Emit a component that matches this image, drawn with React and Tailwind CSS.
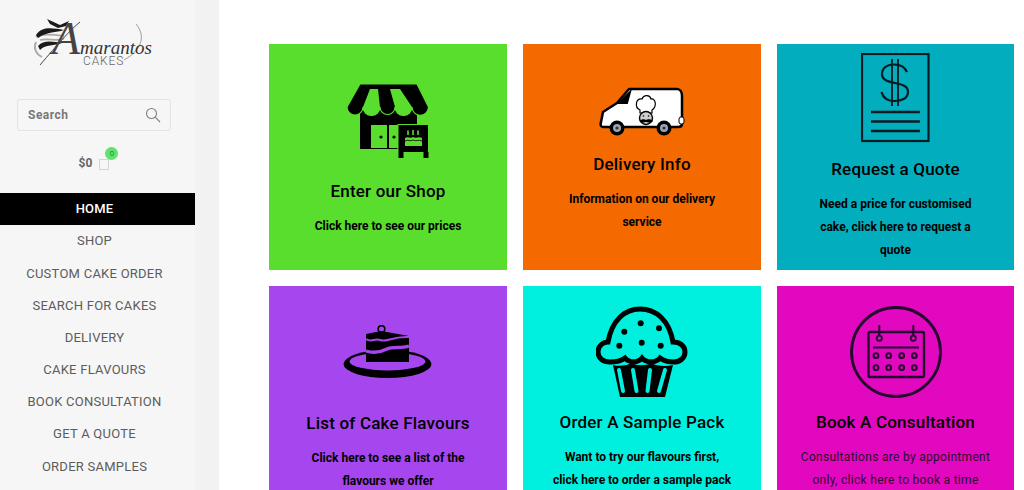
const menu = ["SHOP", "CUSTOM CAKE ORDER", "SEARCH FOR CAKES", "DELIVERY", "CAKE FLAVOURS", "BOOK CONSULTATION", "GET A QUOTE", "ORDER SAMPLES"];

function Logo() {
  return (
    <svg width="130" height="60" viewBox="30 12 130 60" className="block">
      <path d="M36 37C40 33 56 35 64 36M36 42C33 48 36 54 42 57M64 38C60 42 48 38 40 40" fill="none" stroke="#aaa" strokeWidth="1.8" />
      <path d="M36 35C42 26 52 28 64 30C56 33 48 31 38 38ZM38 46C44 39 54 42 62 43C54 46 46 44 40 50ZM47 19L60 25L69 21L66 26L58 28L50 24Z" fill="#1a1a1a" />
      <path d="M80 22C70 30 58 44 40 65" fill="none" stroke="#333" strokeWidth="0.9" />
      <path d="M136 24C146 36 142 50 124 60" fill="none" stroke="#777" strokeWidth="0.7" />
      <text x="52" y="54" fontSize="46" fontFamily="'Liberation Serif', serif" fontStyle="italic" fill="#444">A</text>
      <text x="80" y="54" fontSize="19" textLength="72" fontFamily="'Liberation Serif', serif" fontStyle="italic" fill="#333">marantos</text>
      <text x="83" y="64.5" fontSize="12" fontFamily="Roboto, sans-serif" fontWeight="300" letterSpacing="0.9" fill="#666">CAKES</text>
    </svg>
  );
}

function ShopIcon() {
  return (
    <svg width="82" height="76" viewBox="347 82 82 76" className="block">
      <rect x="360" y="108" width="57" height="41" fill="#000" />
      <path d="M371 125H387V148H371ZM389 125H398V148H389Z" fill="#5ade2e" />
      <circle cx="381" cy="137" r="1.6" fill="#000" /><circle cx="394" cy="137" r="1.6" fill="#000" />
      <path d="M360 84H417L428.5 107A8.25 8.25 0 0 1 412 107A8.5 8.5 0 0 1 395 107A7.5 7.5 0 0 1 380 107A8.5 8.5 0 0 1 363 107A8 8 0 0 1 347 107Z" fill="#000" stroke="#5ade2e" strokeWidth="1.2" />
      <path d="M370 89H378L380 107A8.5 8.5 0 0 1 363 107ZM390 89H400L412 107A8.5 8.5 0 0 1 395 107Z" fill="#5ade2e" />
      <rect x="398" y="124.5" width="30.5" height="28" fill="#000" stroke="#5ade2e" strokeWidth="1" />
      <rect x="398.5" y="152" width="5" height="6" fill="#000" /><rect x="423.5" y="152" width="5" height="6" fill="#000" />
      <path d="M405 138C408 136 410 139 413 137C416 139 419 136 422 138V146H405Z" fill="#5ade2e" />
      <path d="M408 130.5V135M413 130V135M418 130.5V135" stroke="#5ade2e" strokeWidth="1.6" />
      <path d="M405 141C408 139 410 142 413 140C416 142 419 139 422 141" fill="none" stroke="#000" strokeWidth="0.8" />
    </svg>
  );
}

function VanIcon() {
  return (
    <svg width="86" height="50" viewBox="597 87 86 50" className="block">
      <path d="M627 89H675C678 89 680 92 680 96V124C680 126 678 127 676 127H601C599 127 598 125 599 122L601 112L615 103Z" fill="#fff" stroke="#000" strokeWidth="2.5" strokeLinejoin="round" />
      <path d="M617 103L628 92L625 103Z" fill="#000" stroke="#000" strokeWidth="2" />
      <circle cx="615" cy="128" r="7.5" fill="#000" /><circle cx="615" cy="128" r="4" fill="#9aa6b5" /><circle cx="615" cy="128" r="1.6" fill="#333" />
      <circle cx="662" cy="128" r="7.5" fill="#000" /><circle cx="662" cy="128" r="4" fill="#9aa6b5" /><circle cx="662" cy="128" r="1.6" fill="#333" />
      <rect x="677" y="117" width="5" height="7" rx="2" fill="#fff" stroke="#000" />
      <path d="M638 110C632 107 634 98 640 99C642 94 648 95 649 99C654 98 655 107 650 110V113H638Z" fill="#fff" stroke="#000" strokeWidth="1.2" />
      <circle cx="644" cy="118" r="6.5" fill="#cfcfcf" stroke="#000" strokeWidth="1.4" />
      <path d="M638 121C641 118 643 120 644 120C645 120 647 118 651 121C648 124 645 122 644 122C643 122 640 124 638 121Z" fill="#000" />
      <circle cx="641.5" cy="116" r="0.8" fill="#000" /><circle cx="646.5" cy="116" r="0.8" fill="#000" />
    </svg>
  );
}

function QuoteIcon() {
  return (
    <svg width="70" height="90" viewBox="861 54 70 90" className="block" fill="none" stroke="#061a22">
      <rect x="862" y="55" width="66.5" height="87" strokeWidth="2.2" />
      <path d="M907 73C905 68 900 65.5 894 65.5C887 65.5 882 69 882 75C882 81 888 82.5 895 84C902 85.5 908 87 908 93C908 99 902 102 895 102C888 102 883 99 881.5 93" strokeWidth="2.2" />
      <path d="M892 60V107M898 60V107" strokeWidth="1.8" />
      <path d="M871 113H920M871 122.5H920M871 132H920" strokeWidth="2.4" />
    </svg>
  );
}

function CakeIcon() {
  return (
    <svg width="90" height="54" viewBox="344 325 90 54" className="block">
      <ellipse cx="388.5" cy="364" rx="44" ry="14" fill="#000" />
      <ellipse cx="388.5" cy="361.5" rx="38" ry="9" fill="#a646ee" />
      <path d="M367 334L382 331L410 336V362H367Z" fill="#000" />
      <circle cx="382.5" cy="329" r="3.3" fill="none" stroke="#000" strokeWidth="1.6" />
      <path d="M367 339C372 343 376 338 381 340C387 343 393 336 410 337" fill="none" stroke="#a646ee" strokeWidth="2" />
      <path d="M367 351C376 354 382 352 388 349C394 346 402 349 410 346" fill="none" stroke="#a646ee" strokeWidth="3.4" />
    </svg>
  );
}

function MuffinIcon() {
  return (
    <svg width="92" height="92" viewBox="596 306 92 92" className="block">
      <path d="M608 342C612 320 625 309 640 309C656 309 669 320 673 342C680 342 685 346 685 352C685 358 680 362 674 362C669 362 664 361 660 358C656 363 646 363 642 358C638 363 629 363 625 358C621 361 616 362 610 362C603 362 598 358 598 352C598 346 603 342 608 342Z" fill="none" stroke="#000" strokeWidth="5" />
      <path d="M613 365C620 367 628 365 632 363C637 366 646 366 651 363C656 366 666 367 673 365L665 397H620Z" fill="#000" />
      <path d="M619 370L623 391M633 370L636.5 391M650 370L647.5 391M665 370L659 391" stroke="#00f0e0" strokeWidth="4" strokeLinecap="round" />
      {[[640.7, 323.3], [659, 328.3], [624.3, 331.7], [619.3, 345.7], [641.7, 342.7], [660.7, 345.7]].map(([x, y]) => (
        <circle key={x} cx={x} cy={y} r="3" fill="#000" />
      ))}
    </svg>
  );
}

function CalendarIcon() {
  const xs = [875, 887.7, 900.7, 913.3];
  return (
    <svg width="92" height="92" viewBox="849 306 92 92" className="block" fill="none" stroke="#22062e">
      <circle cx="895" cy="352" r="44.5" strokeWidth="2.8" />
      <rect x="867.5" y="332" width="55.5" height="45" rx="1.5" strokeWidth="2.4" />
      <path d="M872 347.5H918" strokeWidth="2.2" />
      <path d="M878.3 325V335M912.3 325V335" strokeWidth="2" />
      <circle cx="878.3" cy="338.3" r="2.6" strokeWidth="1.8" fill="#e208bf" />
      <circle cx="912.3" cy="338.3" r="2.6" strokeWidth="1.8" fill="#e208bf" />
      {[355.7, 367.7].map((y) => xs.map((x) => <circle key={`${x}-${y}`} cx={x} cy={y} r="2.4" strokeWidth="2" />))}
    </svg>
  );
}

function Card({ bg, icon, gap, shift, title, regular, children }) {
  return (
    <div className={`h-[226px] flex flex-col items-center justify-center text-center text-black px-[28px] ${bg} ${shift}`}>
      <div className={gap}>{icon}</div>
      <h3 className="m-0 text-[17px] leading-[26px] font-medium tracking-[0.2px] whitespace-nowrap">{title}</h3>
      <p className={`mt-[11px] text-[12px] leading-[23px] ${regular ? "-mx-[6px] font-normal text-[#2b0a2a] tracking-[0.3px]" : "font-bold"}`}>{children}</p>
    </div>
  );
}

export default function App() {
  return (
    <div className="flex h-[490px] w-[1024px] overflow-hidden bg-white font-['Roboto',sans-serif]">
      <aside className="w-[195px] shrink-0 bg-[#f6f6f6] flex flex-col">
        <div className="flex justify-center pt-[12px] pr-[5px]"><Logo /></div>
        <div className="ml-[17px] mr-[24px] mt-[27px] h-[32px] border border-[#e3e3e3] rounded-[3px] flex items-center justify-between pl-[10px] pr-[9px]">
          <span className="text-[12px] font-bold text-[#787878] tracking-[0.5px]">Search</span>
          <svg width="16" height="16" viewBox="0 0 16 16" fill="none" stroke="#808080" strokeWidth="1.1"><circle cx="6.5" cy="6.5" r="5" /><path d="M10.2 10.2L15 15" /></svg>
        </div>
        <div className="mt-[20px] h-[24px] flex items-center justify-center gap-[7px] pr-[7px]">
          <span className="text-[12px] font-bold text-[#666]">$0</span>
          <span className="relative block w-[10px] h-[11px] mt-[3px] border border-[#d4d4d4]">
            <span className="absolute -top-[13px] left-[5px] w-[13px] h-[13px] rounded-full bg-[#5fe26f] flex items-center justify-center text-[8px] leading-none text-[#2b8a3a]">0</span>
          </span>
        </div>
        <nav className="mt-[18px] flex flex-col">
          <a className="h-[32px] bg-black text-white flex items-center justify-center pr-[6px] text-[13px] font-medium tracking-[0.2px]">HOME</a>
          {menu.map((m) => (
            <a key={m} className="h-[32.2px] flex items-center justify-center pr-[6px] text-[13px] tracking-[0.25px] text-[#5c5c5c]">{m}</a>
          ))}
        </nav>
      </aside>
      <div className="w-[24px] shrink-0 bg-[#f2f2f2]" />
      <main className="flex-1 pl-[50px] pt-[44px]">
        <div className="grid grid-cols-[238px_238px_237px] gap-[16px]">
          <Card bg="bg-[#5ade2e]" icon={<ShopIcon />} gap="mb-[20px]" shift="pt-[6px]" title="Enter our Shop">Click here to see our prices</Card>
          <Card bg="bg-[#f56a00]" icon={<VanIcon />} gap="mb-[14px]" shift="pt-[6px]" title="Delivery Info">Information on our delivery service</Card>
          <Card bg="bg-[#02aebd]" icon={<QuoteIcon />} gap="mb-[13px]" shift="" title="Request a Quote">Need a price for customised cake, click here to request a quote</Card>
          <Card bg="bg-[#a646ee]" icon={<div className="pt-[19px]"><CakeIcon /></div>} gap="mb-[31px]" shift="" title="List of Cake Flavours">Click here to see a list of the flavours we offer</Card>
          <Card bg="bg-[#00f0e0]" icon={<MuffinIcon />} gap="mb-[11px]" shift="" title="Order A Sample Pack">Want to try our flavours first, click here to order a sample pack</Card>
          <Card bg="bg-[#e208bf]" icon={<CalendarIcon />} gap="mb-[11px]" shift="" title="Book A Consultation" regular>Consultations are by appointment only, click here to book a time</Card>
        </div>
      </main>
    </div>
  );
}
